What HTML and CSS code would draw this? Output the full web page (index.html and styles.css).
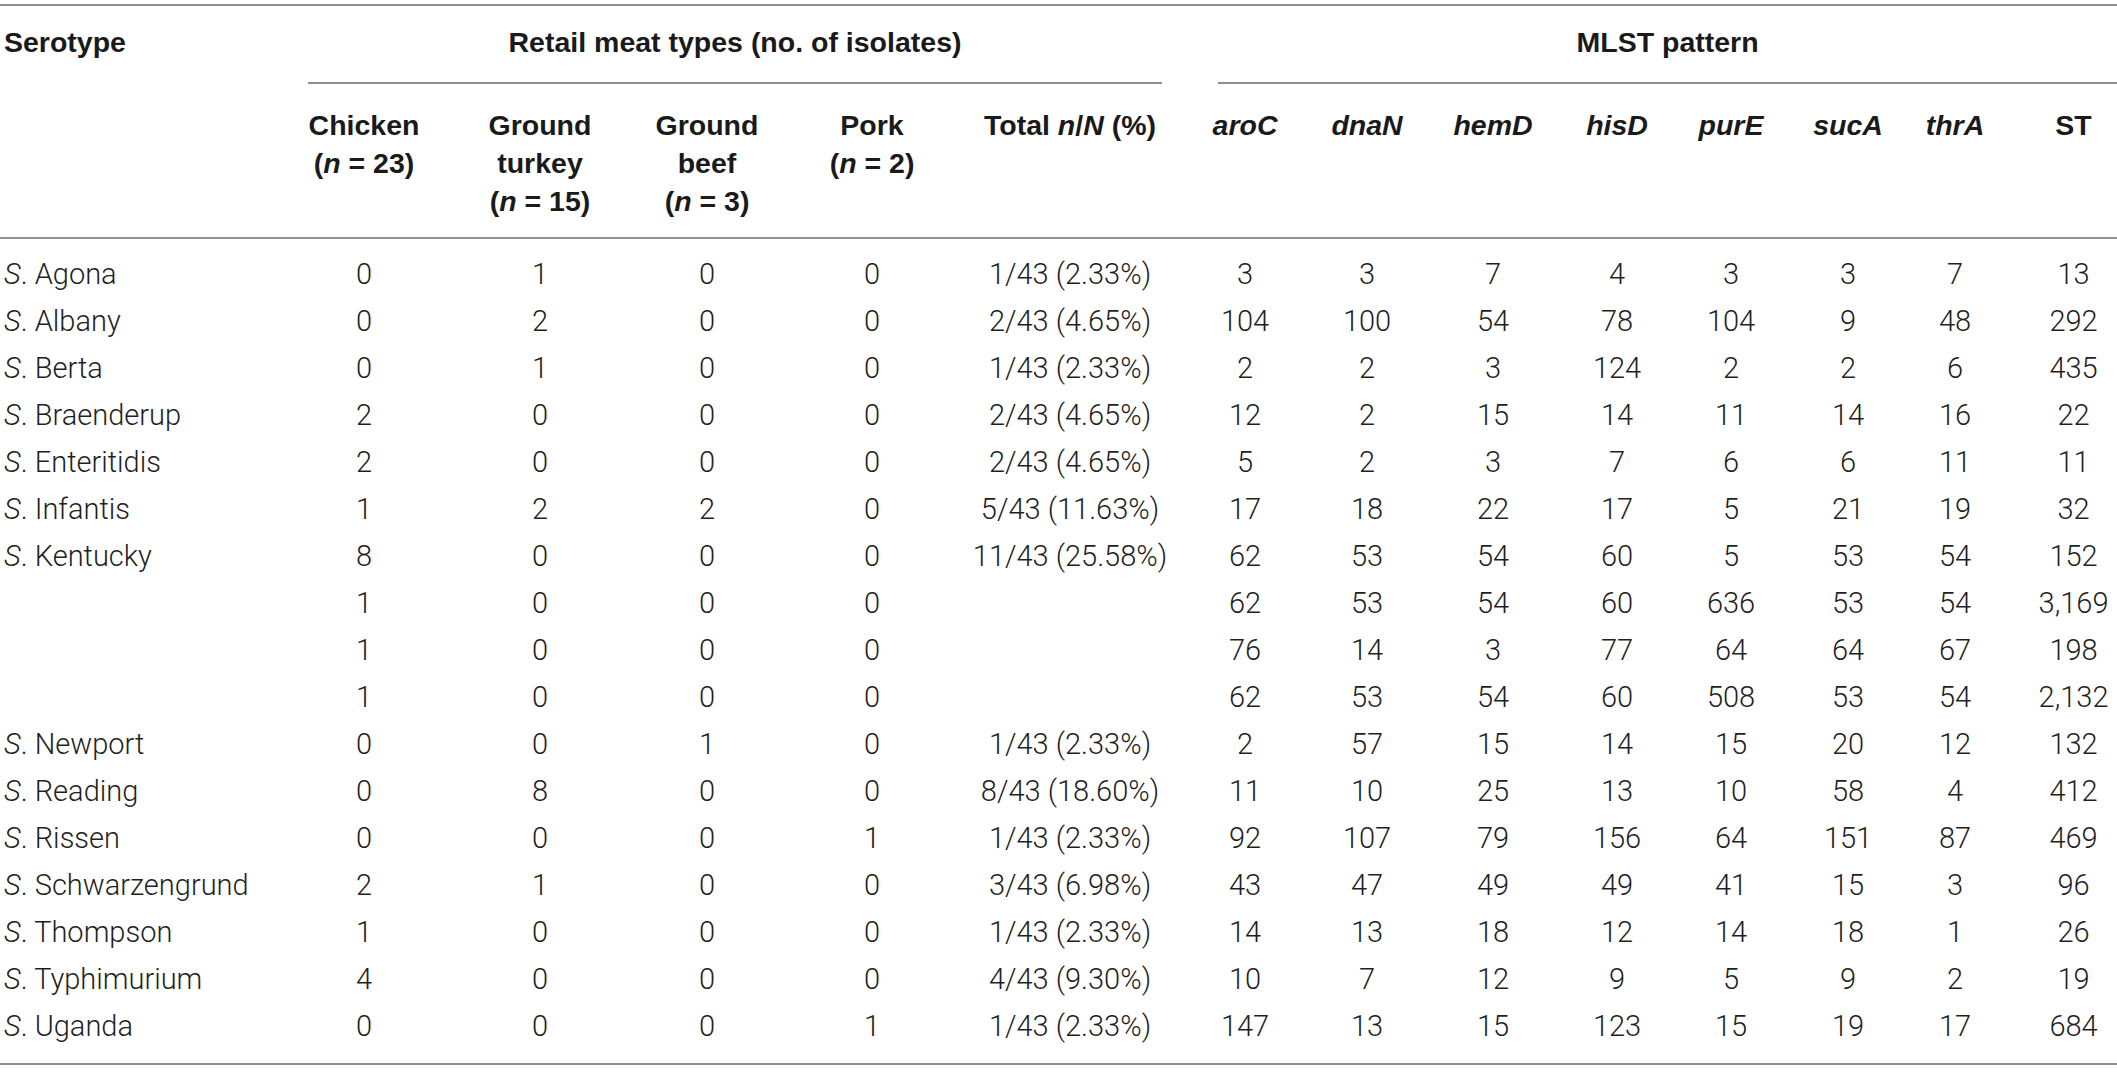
FILE: index.html
```html
<!DOCTYPE html>
<html lang="en">
<head>
<meta charset="utf-8">
<title>Serotype and MLST table</title>
<link rel="stylesheet" href="styles.css">
</head>
<body>
<div class="wrap">
<table class="data">
  <colgroup>
    <col class="c-sero"><col class="c-chk"><col class="c-tur"><col class="c-beef"><col class="c-pork"><col class="c-tot">
    <col class="c-aro"><col class="c-dna"><col class="c-hem"><col class="c-his"><col class="c-pur"><col class="c-suc"><col class="c-thr"><col class="c-st">
  </colgroup>
  <thead>
    <tr class="h1">
      <th rowspan="2" class="sero-h">Serotype</th>
      <th colspan="5" class="span"><div class="span-in retail">Retail meat types (no. of isolates)</div></th>
      <th colspan="8" class="span"><div class="span-in mlst">MLST pattern</div></th>
    </tr>
    <tr class="h2">
      <th>Chicken<br>(<i>n</i> = 23)</th>
      <th>Ground<br>turkey<br>(<i>n</i> = 15)</th>
      <th>Ground<br>beef<br>(<i>n</i> = 3)</th>
      <th>Pork<br>(<i>n</i> = 2)</th>
      <th>Total <i>n</i>/<i>N</i> (%)</th>
      <th><i>aroC</i></th>
      <th><i>dnaN</i></th>
      <th><i>hemD</i></th>
      <th><i>hisD</i></th>
      <th><i>purE</i></th>
      <th><i>sucA</i></th>
      <th><i>thrA</i></th>
      <th class="st">ST</th>
    </tr>
  </thead>
  <tbody>
    <tr class="first"><td class="name"><i>S</i>. Agona</td><td>0</td><td>1</td><td>0</td><td>0</td><td>1/43 (2.33%)</td><td>3</td><td>3</td><td>7</td><td>4</td><td>3</td><td>3</td><td>7</td><td class="st">13</td></tr>
    <tr><td class="name"><i>S</i>. Albany</td><td>0</td><td>2</td><td>0</td><td>0</td><td>2/43 (4.65%)</td><td>104</td><td>100</td><td>54</td><td>78</td><td>104</td><td>9</td><td>48</td><td class="st">292</td></tr>
    <tr><td class="name"><i>S</i>. Berta</td><td>0</td><td>1</td><td>0</td><td>0</td><td>1/43 (2.33%)</td><td>2</td><td>2</td><td>3</td><td>124</td><td>2</td><td>2</td><td>6</td><td class="st">435</td></tr>
    <tr><td class="name"><i>S</i>. Braenderup</td><td>2</td><td>0</td><td>0</td><td>0</td><td>2/43 (4.65%)</td><td>12</td><td>2</td><td>15</td><td>14</td><td>11</td><td>14</td><td>16</td><td class="st">22</td></tr>
    <tr><td class="name"><i>S</i>. Enteritidis</td><td>2</td><td>0</td><td>0</td><td>0</td><td>2/43 (4.65%)</td><td>5</td><td>2</td><td>3</td><td>7</td><td>6</td><td>6</td><td>11</td><td class="st">11</td></tr>
    <tr><td class="name"><i>S</i>. Infantis</td><td>1</td><td>2</td><td>2</td><td>0</td><td>5/43 (11.63%)</td><td>17</td><td>18</td><td>22</td><td>17</td><td>5</td><td>21</td><td>19</td><td class="st">32</td></tr>
    <tr><td class="name"><i>S</i>. Kentucky</td><td>8</td><td>0</td><td>0</td><td>0</td><td>11/43 (25.58%)</td><td>62</td><td>53</td><td>54</td><td>60</td><td>5</td><td>53</td><td>54</td><td class="st">152</td></tr>
    <tr><td class="name"></td><td>1</td><td>0</td><td>0</td><td>0</td><td></td><td>62</td><td>53</td><td>54</td><td>60</td><td>636</td><td>53</td><td>54</td><td class="st">3,169</td></tr>
    <tr><td class="name"></td><td>1</td><td>0</td><td>0</td><td>0</td><td></td><td>76</td><td>14</td><td>3</td><td>77</td><td>64</td><td>64</td><td>67</td><td class="st">198</td></tr>
    <tr><td class="name"></td><td>1</td><td>0</td><td>0</td><td>0</td><td></td><td>62</td><td>53</td><td>54</td><td>60</td><td>508</td><td>53</td><td>54</td><td class="st">2,132</td></tr>
    <tr><td class="name"><i>S</i>. Newport</td><td>0</td><td>0</td><td>1</td><td>0</td><td>1/43 (2.33%)</td><td>2</td><td>57</td><td>15</td><td>14</td><td>15</td><td>20</td><td>12</td><td class="st">132</td></tr>
    <tr><td class="name"><i>S</i>. Reading</td><td>0</td><td>8</td><td>0</td><td>0</td><td>8/43 (18.60%)</td><td>11</td><td>10</td><td>25</td><td>13</td><td>10</td><td>58</td><td>4</td><td class="st">412</td></tr>
    <tr><td class="name"><i>S</i>. Rissen</td><td>0</td><td>0</td><td>0</td><td>1</td><td>1/43 (2.33%)</td><td>92</td><td>107</td><td>79</td><td>156</td><td>64</td><td>151</td><td>87</td><td class="st">469</td></tr>
    <tr><td class="name"><i>S</i>. Schwarzengrund</td><td>2</td><td>1</td><td>0</td><td>0</td><td>3/43 (6.98%)</td><td>43</td><td>47</td><td>49</td><td>49</td><td>41</td><td>15</td><td>3</td><td class="st">96</td></tr>
    <tr><td class="name"><i>S</i>. Thompson</td><td>1</td><td>0</td><td>0</td><td>0</td><td>1/43 (2.33%)</td><td>14</td><td>13</td><td>18</td><td>12</td><td>14</td><td>18</td><td>1</td><td class="st">26</td></tr>
    <tr><td class="name"><i>S</i>. Typhimurium</td><td>4</td><td>0</td><td>0</td><td>0</td><td>4/43 (9.30%)</td><td>10</td><td>7</td><td>12</td><td>9</td><td>5</td><td>9</td><td>2</td><td class="st">19</td></tr>
    <tr class="last"><td class="name"><i>S</i>. Uganda</td><td>0</td><td>0</td><td>0</td><td>1</td><td>1/43 (2.33%)</td><td>147</td><td>13</td><td>15</td><td>123</td><td>15</td><td>19</td><td>17</td><td class="st">684</td></tr>
  </tbody>
</table>
</div>
</body>
</html>
```
FILE: styles.css
```css
html, body {
  margin: 0;
  padding: 0;
  background: #ffffff;
}

.wrap {
  padding-top: 4px;
}

.data {
  width: 2117px;
  table-layout: fixed;
  border-collapse: separate;
  border-spacing: 0;
  color: #1f1f1f;
  font-family: Roboto, "Liberation Sans", sans-serif;
  font-weight: 300;
  font-size: 29px;
}

.c-sero { width: 278px; }
.c-chk { width: 172px; }
.c-tur { width: 180px; }
.c-beef { width: 154px; }
.c-pork { width: 176px; }
.c-tot { width: 220px; }
.c-aro { width: 130px; }
.c-dna { width: 114px; }
.c-hem { width: 138px; }
.c-his { width: 110px; }
.c-pur { width: 118px; }
.c-suc { width: 116px; }
.c-thr { width: 98px; }
.c-st { width: 113px; }

.data th {
  font-family: "Liberation Sans", Arial, sans-serif;
  font-weight: bold;
  font-size: 28.5px;
  line-height: 38px;
  color: #1a1a1a;
  text-align: center;
  vertical-align: top;
  padding: 0;
  white-space: nowrap;
}

.data th i {
  font-style: italic;
}

.h1 th {
  border-top: 2px solid #8f8f8f;
  padding-top: 17px;
}

.sero-h {
  text-align: left !important;
  padding-left: 4px !important;
  border-bottom: 2px solid #8f8f8f;
}

.span-in {
  padding-bottom: 21px;
  border-bottom: 2px solid #8f8f8f;
}

.retail {
  margin-left: 30px;
  margin-right: 18px;
}

.mlst {
  margin-left: 38px;
}

.h2 th {
  padding-top: 22px;
  padding-bottom: 17px;
  border-bottom: 2px solid #8f8f8f;
}

.data th.st,
.data td.st {
  padding-left: 26px;
}

.data td {
  padding: 0;
  line-height: 47px;
  height: 47px;
  text-align: center;
  vertical-align: middle;
  white-space: nowrap;
}

.data td.name {
  text-align: left;
  padding-left: 4px;
}

.first td {
  padding-top: 12px;
}

.first td.name {
  padding-top: 12px;
}

.last td {
  padding-bottom: 13px;
  border-bottom: 2px solid #8f8f8f;
}
```
